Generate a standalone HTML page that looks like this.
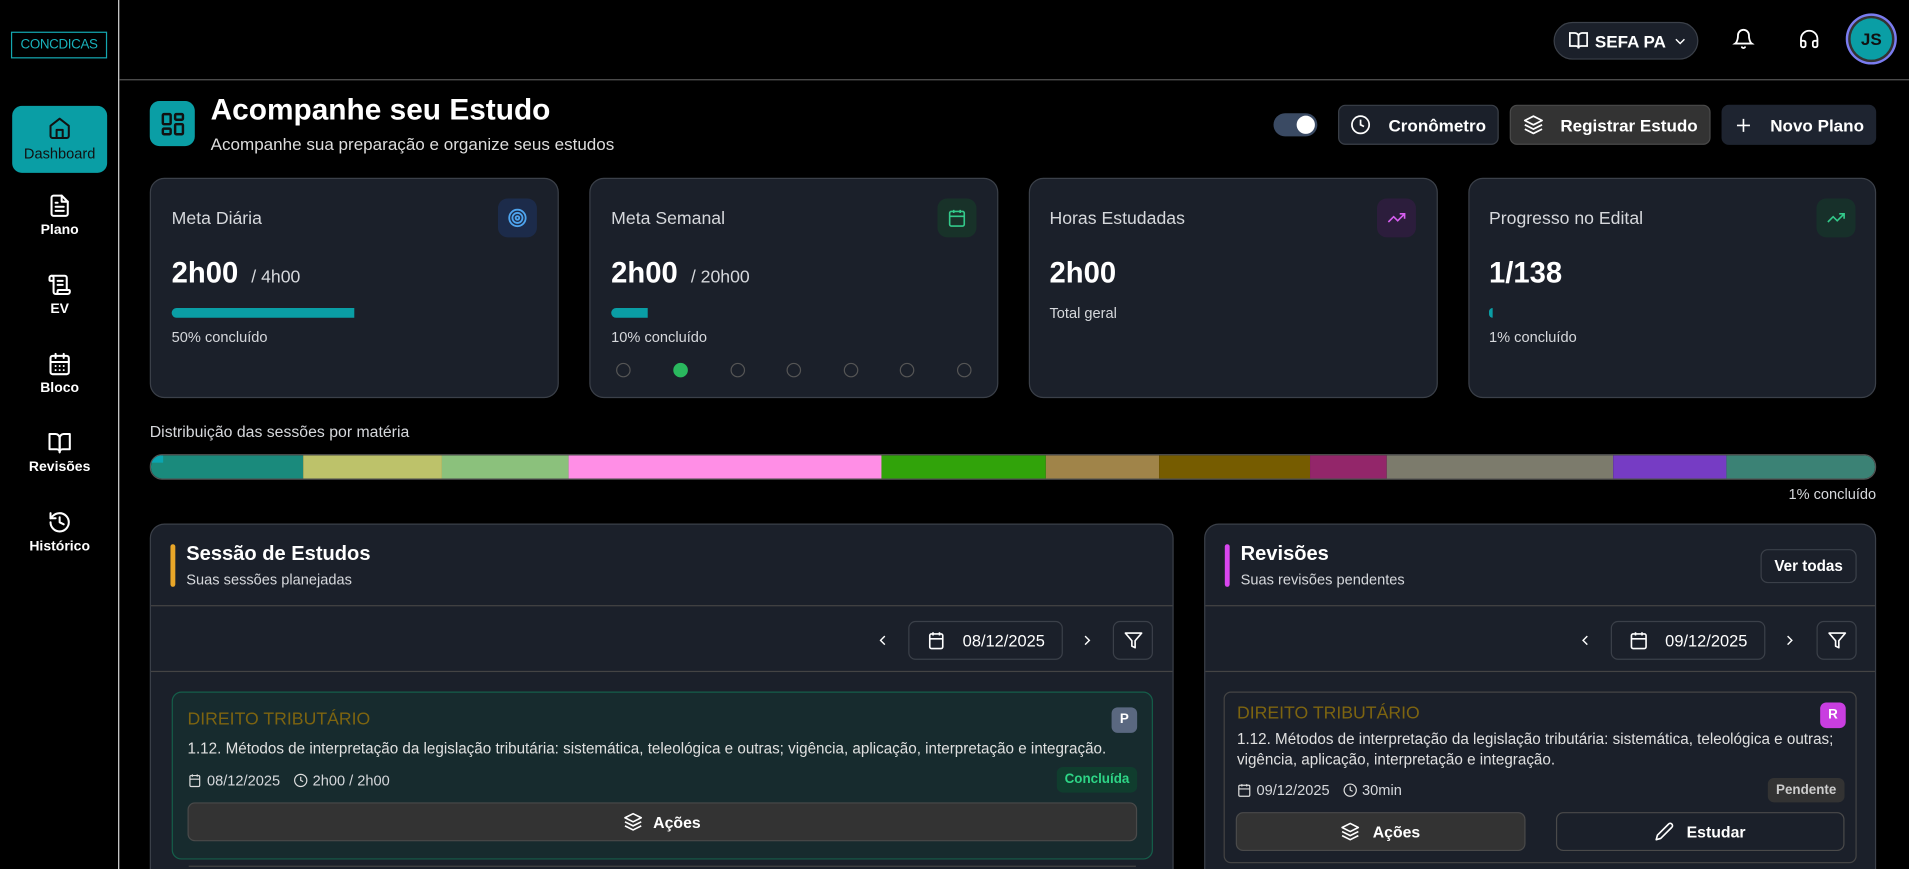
<!DOCTYPE html>
<html><head><meta charset="utf-8"><style>
*{box-sizing:border-box;margin:0;padding:0}
html,body{width:1909px;height:869px;overflow:hidden;background:#000}
#w{position:absolute;left:0;top:0;width:1568px;height:714px;overflow:hidden;transform:scale(1.2175);transform-origin:0 0;font-family:"Liberation Sans",sans-serif;color:#fff}
.a{position:absolute}
svg{display:block}
.side{left:0;top:0;width:98px;height:714px;border-right:1px solid #d8d8d8}
.logo{left:9px;top:26px;width:79px;height:22px;border:1px solid #14a7b0;color:#19b3bc;font-size:11px;text-align:center;line-height:20px;letter-spacing:-0.3px}
.nav{left:10px;width:78px;text-align:center;font-size:11.5px;font-weight:bold}
.nav svg{margin:0 auto 4px}
.hl{left:98px;top:65px;width:1470px;height:1px;background:#555}
.card{background:#1b202a;border:1px solid #3b4049;border-radius:12px}
.btn{border-radius:6px;font-size:14px;font-weight:bold;display:flex;align-items:center;justify-content:center;gap:14px}
.ct{font-size:14.5px;color:#d6d8dc}
.big{font-size:24px;font-weight:bold}
.big span{font-size:14.5px;font-weight:normal;color:#d6d8dc}
.sm{font-size:12px;color:#d6d8dc}
.ib{width:32px;height:32px;border-radius:8px;display:flex;align-items:center;justify-content:center}
.dot{width:12px;height:12px;border-radius:50%;border:1px solid #555;top:298px}
.seg{position:absolute;top:0;height:100%}
</style></head><body><div id="w">
<div class="a side"></div>
<div class="a logo">CONCDICAS</div>
<div class="a" style="left:10px;top:87px;width:78px;height:55px;background:#0a9ea5;border-radius:8px"></div>
<div class="a nav" style="top:95px;font-weight:normal;font-size:12px"><svg width="20" height="20" viewBox="0 0 24 24" fill="none" stroke="#111" stroke-width="2" stroke-linecap="round" stroke-linejoin="round"><path d="M3 10l9-7 9 7v10a2 2 0 0 1-2 2H5a2 2 0 0 1-2-2z"/><path d="M9 22v-8h6v8"/></svg><span style="color:#111">Dashboard</span></div>
<div class="a nav" style="top:159px"><svg width="20" height="20" viewBox="0 0 24 24" fill="none" stroke="#fff" stroke-width="2" stroke-linecap="round" stroke-linejoin="round"><path d="M14 2H6a2 2 0 0 0-2 2v16a2 2 0 0 0 2 2h12a2 2 0 0 0 2-2V8z"/><path d="M14 2v6h6M8 13h8M8 17h8M8 9h2"/></svg>Plano</div>
<div class="a nav" style="top:224px"><svg width="20" height="20" viewBox="0 0 24 24" fill="none" stroke="#fff" stroke-width="2" stroke-linecap="round" stroke-linejoin="round"><path d="M15 12h-5M15 8h-5M19 17V5a2 2 0 0 0-2-2H4"/><path d="M8 21h12a2 2 0 0 0 2-2v-1a1 1 0 0 0-1-1H11a1 1 0 0 0-1 1v1a2 2 0 1 1-4 0V5a2 2 0 1 0-4 0v2a1 1 0 0 0 1 1h3"/></svg>EV</div>
<div class="a nav" style="top:289px"><svg width="20" height="20" viewBox="0 0 24 24" fill="none" stroke="#fff" stroke-width="2" stroke-linecap="round" stroke-linejoin="round"><rect x="3" y="4" width="18" height="18" rx="2"/><path d="M16 2v4M8 2v4M3 10h18M8 14h.01M12 14h.01M16 14h.01M8 18h.01M12 18h.01M16 18h.01"/></svg>Bloco</div>
<div class="a nav" style="top:354px"><svg width="20" height="20" viewBox="0 0 24 24" fill="none" stroke="#fff" stroke-width="2" stroke-linecap="round" stroke-linejoin="round"><path d="M2 3h6a4 4 0 0 1 4 4v14a3 3 0 0 0-3-3H2z"/><path d="M22 3h-6a4 4 0 0 0-4 4v14a3 3 0 0 1 3-3h7z"/></svg>Revisões</div>
<div class="a nav" style="top:419px"><svg width="20" height="20" viewBox="0 0 24 24" fill="none" stroke="#fff" stroke-width="2" stroke-linecap="round" stroke-linejoin="round"><path d="M3 12a9 9 0 1 0 9-9 9.75 9.75 0 0 0-6.74 2.74L3 8"/><path d="M3 3v5h5M12 7v5l4 2"/></svg>Histórico</div>
<div class="a hl"></div>

<div class="a" style="left:1276px;top:18px;width:119px;height:31px;border:1px solid #3b4049;border-radius:16px;background:#1b202a;display:flex;align-items:center;padding-left:11px;gap:5px;font-weight:bold;font-size:14px"><svg width="17" height="17" viewBox="0 0 24 24" fill="none" stroke="#fff" stroke-width="2"><path d="M2 3h6a4 4 0 0 1 4 4v14a3 3 0 0 0-3-3H2z"/><path d="M22 3h-6a4 4 0 0 0-4 4v14a3 3 0 0 1 3-3h7z"/></svg>SEFA PA<svg width="14" height="14" viewBox="0 0 24 24" fill="none" stroke="#fff" stroke-width="2"><path d="M6 9l6 6 6-6"/></svg></div>
<svg class="a" style="left:1423px;top:23px" width="18" height="18" viewBox="0 0 24 24" fill="none" stroke="#fff" stroke-width="2" stroke-linecap="round"><path d="M6 8a6 6 0 0 1 12 0c0 7 3 9 3 9H3s3-2 3-9M10.3 21a1.94 1.94 0 0 0 3.4 0"/></svg>
<svg class="a" style="left:1477px;top:23px" width="18" height="18" viewBox="0 0 24 24" fill="none" stroke="#fff" stroke-width="2" stroke-linecap="round"><path d="M3 14h3a2 2 0 0 1 2 2v3a2 2 0 0 1-2 2H5a2 2 0 0 1-2-2v-7a9 9 0 0 1 18 0v7a2 2 0 0 1-2 2h-1a2 2 0 0 1-2-2v-3a2 2 0 0 1 2-2h3"/></svg>
<div class="a" style="left:1516px;top:11px;width:42px;height:42px;border-radius:50%;background:#7a7cf0;padding:2px"><div style="width:38px;height:38px;border-radius:50%;background:#333;padding:2px"><div style="width:34px;height:34px;border-radius:50%;background:#0a9ea5;color:#111;font-weight:bold;font-size:14px;text-align:center;line-height:34px">JS</div></div></div>

<div class="a" style="left:123px;top:83px;width:37px;height:37px;border-radius:8px;background:#0a9ea5;display:flex;align-items:center;justify-content:center"><svg width="22" height="22" viewBox="0 0 24 24" fill="none" stroke="#111" stroke-width="2.2"><rect x="3" y="3" width="7" height="9" rx="1"/><rect x="14" y="3" width="7" height="5" rx="1"/><rect x="14" y="12" width="7" height="9" rx="1"/><rect x="3" y="16" width="7" height="5" rx="1"/></svg></div>
<div class="a" style="left:173px;top:77px;font-size:24.5px;font-weight:bold">Acompanhe seu Estudo</div>
<div class="a" style="left:173px;top:110px;font-size:14px;color:#ddd">Acompanhe sua preparação e organize seus estudos</div>

<div class="a" style="left:1046px;top:93px;width:36px;height:19px;border-radius:10px;background:#3a4a63"><div style="position:absolute;right:2px;top:2px;width:15px;height:15px;border-radius:50%;background:#fff"></div></div>
<div class="a btn" style="left:1099px;top:86px;width:132px;height:33px;border:1px solid #3b4049;background:#1b202a"><svg width="17" height="17" viewBox="0 0 24 24" fill="none" stroke="#fff" stroke-width="2"><circle cx="12" cy="12" r="10"/><path d="M12 6v6l4 2"/></svg>Cronômetro</div>
<div class="a btn" style="left:1240px;top:86px;width:165px;height:33px;border:1px solid #4a4a4a;background:#333"><svg width="17" height="17" viewBox="0 0 24 24" fill="none" stroke="#fff" stroke-width="2" stroke-linejoin="round"><path d="M12 2l10 5-10 5L2 7z"/><path d="M2 12l10 5 10-5M2 17l10 5 10-5"/></svg>Registrar Estudo</div>
<div class="a btn" style="left:1414px;top:86px;width:127px;height:33px;background:#1e2430"><svg width="16" height="16" viewBox="0 0 24 24" fill="none" stroke="#fff" stroke-width="2"><path d="M12 4v16M4 12h16"/></svg>Novo Plano</div>

<div class="a card" style="left:123px;top:146px;width:336px;height:181px"></div>
<div class="a ct" style="left:141px;top:172px">Meta Diária</div>
<div class="a ib" style="left:409px;top:163px;background:#1c2b4a"><svg width="18" height="18" viewBox="0 0 24 24" fill="none" stroke="#4ea4ee" stroke-width="2"><circle cx="12" cy="12" r="9"/><circle cx="12" cy="12" r="5.5"/><circle cx="12" cy="12" r="2"/></svg></div>
<div class="a big" style="left:141px;top:211px">2h00 <span>&nbsp;/ 4h00</span></div>
<div class="a" style="left:141px;top:253px;width:150px;height:8px;border-radius:4px 0 0 4px;background:#0a9ea5"></div>
<div class="a sm" style="left:141px;top:270px">50% concluído</div>

<div class="a card" style="left:484px;top:146px;width:336px;height:181px"></div>
<div class="a ct" style="left:502px;top:172px">Meta Semanal</div>
<div class="a ib" style="left:770px;top:163px;background:#183229"><svg width="16" height="16" viewBox="0 0 24 24" fill="none" stroke="#33c98a" stroke-width="2"><rect x="3" y="4" width="18" height="18" rx="2"/><path d="M16 2v4M8 2v4M3 10h18"/></svg></div>
<div class="a big" style="left:502px;top:211px">2h00 <span>&nbsp;/ 20h00</span></div>
<div class="a" style="left:502px;top:253px;width:30px;height:8px;border-radius:4px 0 0 4px;background:#0a9ea5"></div>
<div class="a sm" style="left:502px;top:270px">10% concluído</div>
<div class="a dot" style="left:506px"></div><div class="a dot" style="left:553px;background:#2ab85e;border-color:#2ab85e"></div><div class="a dot" style="left:600px"></div><div class="a dot" style="left:646px"></div><div class="a dot" style="left:693px"></div><div class="a dot" style="left:739px"></div><div class="a dot" style="left:786px"></div>

<div class="a card" style="left:845px;top:146px;width:336px;height:181px"></div>
<div class="a ct" style="left:862px;top:172px">Horas Estudadas</div>
<div class="a ib" style="left:1131px;top:163px;background:#2c1d3c"><svg width="16" height="16" viewBox="0 0 24 24" fill="none" stroke="#d65ef0" stroke-width="2"><path d="M22 7l-8.5 8.5-5-5L2 17M16 7h6v6"/></svg></div>
<div class="a big" style="left:862px;top:211px">2h00</div>
<div class="a sm" style="left:862px;top:250px">Total geral</div>

<div class="a card" style="left:1206px;top:146px;width:335px;height:181px"></div>
<div class="a ct" style="left:1223px;top:172px">Progresso no Edital</div>
<div class="a ib" style="left:1492px;top:163px;background:#17302a"><svg width="16" height="16" viewBox="0 0 24 24" fill="none" stroke="#33c98a" stroke-width="2"><path d="M22 7l-8.5 8.5-5-5L2 17M16 7h6v6"/></svg></div>
<div class="a big" style="left:1223px;top:211px">1/138</div>
<div class="a" style="left:1223px;top:253px;width:3px;height:8px;border-radius:4px 0 0 4px;background:#0a9ea5"></div>
<div class="a sm" style="left:1223px;top:270px">1% concluído</div>

<div class="a" style="left:123px;top:347px;font-size:13px;color:#d6d8dc">Distribuição das sessões por matéria</div>
<div class="a" style="left:123px;top:373px;width:1418px;height:21px;border-radius:10px;overflow:hidden;border:1px solid #555">
<div class="seg" style="left:0;width:125px;background:#1a8a7c"></div>
<div class="seg" style="left:125px;width:114px;background:#bdc26a"></div>
<div class="seg" style="left:239px;width:104px;background:#8bc17c"></div>
<div class="seg" style="left:343px;width:257px;background:#ff8ee6"></div>
<div class="seg" style="left:600px;width:135px;background:#31a30a"></div>
<div class="seg" style="left:735px;width:93px;background:#a08449"></div>
<div class="seg" style="left:828px;width:124px;background:#765c00"></div>
<div class="seg" style="left:952px;width:63px;background:#93266a"></div>
<div class="seg" style="left:1015px;width:186px;background:#7c7b6c"></div>
<div class="seg" style="left:1201px;width:93px;background:#763cc4"></div>
<div class="seg" style="left:1294px;width:124px;background:#3b8275"></div>
<div class="seg" style="left:0;width:10px;height:6px;background:#0aa5b0"></div>
</div>
<div class="a sm" style="left:1441px;top:399px;width:100px;text-align:right">1% concluído</div>

<div class="a card" style="left:123px;top:430px;width:841px;height:300px"></div>
<div class="a" style="left:140px;top:447px;width:4px;height:35px;border-radius:2px;background:#e9a628"></div>
<div class="a" style="left:153px;top:446px;font-size:16.5px;font-weight:bold">Sessão de Estudos</div>
<div class="a sm" style="left:153px;top:469px">Suas sessões planejadas</div>
<div class="a" style="left:124px;top:497px;width:839px;height:1px;background:#444"></div>
<div class="a" style="left:124px;top:551px;width:839px;height:1px;background:#444"></div>
<svg class="a" style="left:718px;top:518px" width="14" height="16" viewBox="0 0 24 24" fill="none" stroke="#fff" stroke-width="2"><path d="M15 18l-6-6 6-6"/></svg>
<div class="a btn" style="left:746px;top:510px;width:127px;height:32px;border:1px solid #3b4049;font-weight:normal;font-size:13.5px;gap:14px"><svg width="16" height="16" viewBox="0 0 24 24" fill="none" stroke="#fff" stroke-width="2"><rect x="4" y="4" width="16" height="18" rx="2"/><path d="M16 2v4M8 2v4M4 10h16"/></svg>08/12/2025</div>
<svg class="a" style="left:886px;top:518px" width="14" height="16" viewBox="0 0 24 24" fill="none" stroke="#fff" stroke-width="2"><path d="M9 18l6-6-6-6"/></svg>
<div class="a btn" style="left:914px;top:510px;width:33px;height:32px;border:1px solid #3b4049"><svg width="16" height="16" viewBox="0 0 24 24" fill="none" stroke="#fff" stroke-width="2" stroke-linejoin="round"><path d="M22 3H2l8 9.46V19l4 2v-8.54z"/></svg></div>

<div class="a" style="left:141px;top:568px;width:806px;height:138px;border:1px solid #155e4a;border-radius:8px;background:#172b2e"></div>
<div class="a" style="left:154px;top:583px;font-size:14.5px;color:#7d6410">DIREITO TRIBUTÁRIO</div>
<div class="a" style="left:913px;top:581px;width:21px;height:21px;border-radius:5px;background:#5a6880;font-size:11px;font-weight:bold;text-align:center;line-height:21px">P</div>
<div class="a" style="left:154px;top:608px;font-size:12.5px;color:#e0e0e0">1.12. Métodos de interpretação da legislação tributária: sistemática, teleológica e outras; vigência, aplicação, interpretação e integração.</div>
<div class="a sm" style="left:154px;top:634px;display:flex;align-items:center;gap:4px"><svg width="12" height="12" viewBox="0 0 24 24" fill="none" stroke="#ddd" stroke-width="2"><rect x="4" y="4" width="16" height="18" rx="2"/><path d="M16 2v4M8 2v4M4 10h16"/></svg>08/12/2025&nbsp;&nbsp;<svg width="12" height="12" viewBox="0 0 24 24" fill="none" stroke="#ddd" stroke-width="2"><circle cx="12" cy="12" r="10"/><path d="M12 6v6l4 2"/></svg>2h00 / 2h00</div>
<div class="a" style="left:868px;top:630px;width:66px;height:21px;border-radius:5px;background:#103d2e;color:#2ed586;font-size:11px;font-weight:bold;text-align:center;line-height:21px">Concluída</div>
<div class="a btn" style="left:154px;top:659px;width:780px;height:32px;border:1px solid #4a4a4a;background:#333;font-size:13px;gap:8px"><svg width="16" height="16" viewBox="0 0 24 24" fill="none" stroke="#fff" stroke-width="2" stroke-linejoin="round"><path d="M12 2l10 5-10 5L2 7z"/><path d="M2 12l10 5 10-5M2 17l10 5 10-5"/></svg>Ações</div>
<div class="a" style="left:155px;top:711px;width:778px;height:3px;border-top:1px solid #444"></div>

<div class="a card" style="left:989px;top:430px;width:552px;height:300px"></div>
<div class="a" style="left:1006px;top:447px;width:4px;height:35px;border-radius:2px;background:#d946ef"></div>
<div class="a" style="left:1019px;top:446px;font-size:16.5px;font-weight:bold">Revisões</div>
<div class="a sm" style="left:1019px;top:469px">Suas revisões pendentes</div>
<div class="a btn" style="left:1446px;top:451px;width:79px;height:28px;border:1px solid #3b4049;font-size:12.5px">Ver todas</div>
<div class="a" style="left:990px;top:497px;width:550px;height:1px;background:#444"></div>
<div class="a" style="left:990px;top:551px;width:550px;height:1px;background:#444"></div>
<svg class="a" style="left:1295px;top:518px" width="14" height="16" viewBox="0 0 24 24" fill="none" stroke="#fff" stroke-width="2"><path d="M15 18l-6-6 6-6"/></svg>
<div class="a btn" style="left:1323px;top:510px;width:127px;height:32px;border:1px solid #3b4049;font-weight:normal;font-size:13.5px;gap:14px"><svg width="16" height="16" viewBox="0 0 24 24" fill="none" stroke="#fff" stroke-width="2"><rect x="3" y="4" width="18" height="18" rx="2"/><path d="M16 2v4M8 2v4M3 10h18M8 14h.01M12 14h.01M16 14h.01M8 18h.01M12 18h.01M16 18h.01"/></svg>09/12/2025</div>
<svg class="a" style="left:1463px;top:518px" width="14" height="16" viewBox="0 0 24 24" fill="none" stroke="#fff" stroke-width="2"><path d="M9 18l6-6-6-6"/></svg>
<div class="a btn" style="left:1492px;top:510px;width:33px;height:32px;border:1px solid #3b4049"><svg width="16" height="16" viewBox="0 0 24 24" fill="none" stroke="#fff" stroke-width="2" stroke-linejoin="round"><path d="M22 3H2l8 9.46V19l4 2v-8.54z"/></svg></div>

<div class="a" style="left:1005px;top:568px;width:520px;height:141px;border:1px solid #444;border-radius:6px"></div>
<div class="a" style="left:1016px;top:578px;font-size:14.5px;color:#7d6410">DIREITO TRIBUTÁRIO</div>
<div class="a" style="left:1495px;top:577px;width:21px;height:21px;border-radius:5px;background:#c93ee0;font-size:11px;font-weight:bold;text-align:center;line-height:21px">R</div>
<div class="a" style="left:1016px;top:599px;width:500px;font-size:12.5px;line-height:17px;color:#e0e0e0">1.12. Métodos de interpretação da legislação tributária: sistemática, teleológica e outras; vigência, aplicação, interpretação e integração.</div>
<div class="a sm" style="left:1016px;top:642px;display:flex;align-items:center;gap:4px"><svg width="12" height="12" viewBox="0 0 24 24" fill="none" stroke="#ddd" stroke-width="2"><rect x="3" y="4" width="18" height="18" rx="2"/><path d="M16 2v4M8 2v4M3 10h18"/></svg>09/12/2025&nbsp;&nbsp;<svg width="12" height="12" viewBox="0 0 24 24" fill="none" stroke="#ddd" stroke-width="2"><circle cx="12" cy="12" r="10"/><path d="M12 6v6l4 2"/></svg>30min</div>
<div class="a" style="left:1452px;top:639px;width:63px;height:20px;border-radius:5px;background:#333;color:#ccc;font-size:11px;font-weight:bold;text-align:center;line-height:20px">Pendente</div>
<div class="a btn" style="left:1015px;top:667px;width:238px;height:32px;border:1px solid #4a4a4a;background:#333;font-size:13px;gap:10px"><svg width="16" height="16" viewBox="0 0 24 24" fill="none" stroke="#fff" stroke-width="2" stroke-linejoin="round"><path d="M12 2l10 5-10 5L2 7z"/><path d="M2 12l10 5 10-5M2 17l10 5 10-5"/></svg>Ações</div>
<div class="a btn" style="left:1278px;top:667px;width:237px;height:32px;border:1px solid #4a4a4a;font-size:13px;gap:10px"><svg width="16" height="16" viewBox="0 0 24 24" fill="none" stroke="#fff" stroke-width="2" stroke-linejoin="round"><path d="M17 3a2.85 2.85 0 1 1 4 4L7.5 20.5 2 22l1.5-5.5z"/></svg>Estudar</div>
</div></body></html>
